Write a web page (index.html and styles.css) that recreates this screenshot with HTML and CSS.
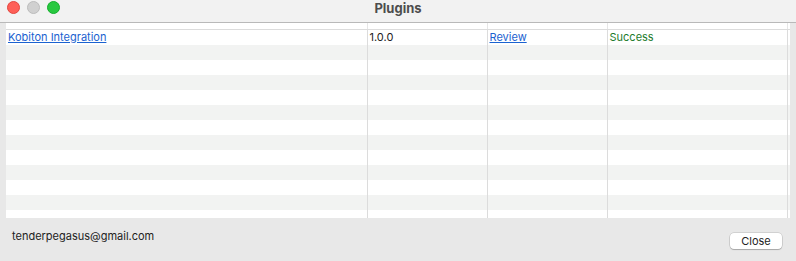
FILE: index.html
```html
<!DOCTYPE html>
<html lang="en">
<head>
    <meta charset="UTF-8">
    <title>Plugins</title>
    <link rel="stylesheet" href="styles.css">
</head>
<body>
    <div class="window">
        <div class="titlebar">
            <div class="lights">
                <span class="light red"></span>
                <span class="light gray"></span>
                <span class="light green"></span>
            </div>
            <div class="title">Plugins</div>
        </div>

        <div class="table-wrap">
            <table class="plugins">
                <colgroup>
                    <col class="c-name">
                    <col class="c-version">
                    <col class="c-action">
                    <col class="c-status">
                    <col>
                </colgroup>
                <thead>
                    <tr><th></th><th></th><th></th><th></th><th></th></tr>
                </thead>
                <tbody>
                    <tr>
                        <td><a href="#">Kobiton Integration</a></td>
                        <td>1.0.0</td>
                        <td><a href="#">Review</a></td>
                        <td class="ok">Success</td>
                        <td></td>
                    </tr>
                    <tr><td></td><td></td><td></td><td></td><td></td></tr>
                    <tr><td></td><td></td><td></td><td></td><td></td></tr>
                    <tr><td></td><td></td><td></td><td></td><td></td></tr>
                    <tr><td></td><td></td><td></td><td></td><td></td></tr>
                    <tr><td></td><td></td><td></td><td></td><td></td></tr>
                    <tr><td></td><td></td><td></td><td></td><td></td></tr>
                    <tr><td></td><td></td><td></td><td></td><td></td></tr>
                    <tr><td></td><td></td><td></td><td></td><td></td></tr>
                    <tr><td></td><td></td><td></td><td></td><td></td></tr>
                    <tr><td></td><td></td><td></td><td></td><td></td></tr>
                    <tr><td></td><td></td><td></td><td></td><td></td></tr>
                    <tr class="last"><td></td><td></td><td></td><td></td><td></td></tr>
                </tbody>
            </table>
        </div>

        <div class="footer">
            <span class="account">tenderpegasus@gmail.com</span>
            <button class="close-btn">Close</button>
        </div>
    </div>
</body>
</html>
```

FILE: styles.css
```css
html, body {
    margin: 0;
    padding: 0;
}

body {
    font-family: Inter, 'Liberation Sans', sans-serif;
    font-size: 11px;
    background: #e8e8e8;
    width: 796px;
    height: 261px;
    overflow: hidden;
}

.window {
    display: flex;
    flex-direction: column;
    height: 261px;
}

.titlebar {
    height: 22px;
    background: #f2f2f2;
    border-bottom: 1px solid #b9b9b9;
    display: flex;
    align-items: center;
    justify-content: center;
    position: relative;
}

.lights {
    position: absolute;
    left: 7px;
    top: 1px;
    display: flex;
    gap: 7px;
}

.light {
    width: 13px;
    height: 13px;
    border-radius: 50%;
    box-sizing: border-box;
}

.light.red {
    background: #fe5f57;
    border: 1px solid #e2463f;
}

.light.gray {
    background: #d0d0d0;
    border: 1px solid #bcbcbc;
}

.light.green {
    background: #28c840;
    border: 1px solid #14ae2c;
}

.title {
    font-size: 13px;
    font-weight: 700;
    color: #4d4d4d;
    margin-top: -6px;
}

.table-wrap {
    margin: 0 6px 0 6px;
    background: #fff;
    height: 195px;
    overflow: hidden;
}

.plugins {
    border-collapse: collapse;
    table-layout: fixed;
    width: 784px;
}

.c-name { width: 361px; }
.c-version { width: 120px; }
.c-action { width: 120px; }
.c-status { width: 180px; }

.plugins th {
    height: 6px;
    padding: 0;
    border-right: 1px solid #e6e6e6;
    border-bottom: 1px solid #dcdcdc;
}

.plugins td {
    height: 15px;
    padding: 0 2px;
    line-height: 15px;
    border-right: 1px solid #dcdcdc;
    color: #222;
    white-space: nowrap;
}

.plugins th:last-child,
.plugins td:last-child {
    border-right: none;
}

.plugins tbody tr:nth-child(even) td {
    background: #f2f3f2;
}

.plugins a {
    color: #1b62d0;
}

.plugins .ok {
    color: #1c7b2c;
}

.footer {
    flex: 1;
    display: flex;
    justify-content: space-between;
    align-items: flex-start;
    padding: 11px 14px 0 12px;
}

.account {
    color: #222;
    font-size: 11px;
}

.close-btn {
    margin-top: 4px;
    font-family: Inter, 'Liberation Sans', sans-serif;
    font-size: 11px;
    color: #222;
    background: #fff;
    border: none;
    border-radius: 4px;
    box-shadow: 0 0 0 0.5px rgba(0,0,0,0.2), 0 1px 1px rgba(0,0,0,0.2);
    width: 52px;
    height: 16px;
    padding: 0;
}
```
